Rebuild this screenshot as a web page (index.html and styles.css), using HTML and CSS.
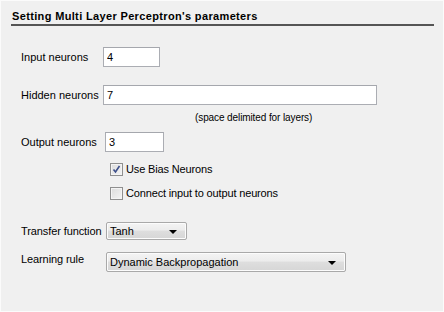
FILE: index.html
```html
<!DOCTYPE html>
<html lang="en">
  <head>
    <meta charset="UTF-8" />
    <title>Multi Layer Perceptron</title>
    <link rel="stylesheet" href="styles.css">
  </head>

  <body>
    <div class="panel">
      <div class="title">Setting Multi Layer Perceptron's parameters</div>

      <div class="form">
        <div class="row row-input">
          <label class="label">Input neurons</label>
          <input class="field field-small" type="text" value="4" />
        </div>

        <div class="row row-hidden">
          <label class="label">Hidden neurons</label>
          <input class="field field-wide" type="text" value="7" />
        </div>
        <div class="hint">(space delimited for layers)</div>

        <div class="row row-output">
          <label class="label label-out">Output neurons</label>
          <input class="field field-out" type="text" value="3" />
        </div>

        <div class="check check-first">
          <span class="box">
            <svg width="9" height="9" viewBox="0 0 9 9">
              <path d="M1.5 4.5 L3.5 7 L7.5 1" fill="none" stroke="#3d4f8a" stroke-width="1.6" />
            </svg>
          </span>
          <span>Use Bias Neurons</span>
        </div>

        <div class="check check-second">
          <span class="box"></span>
          <span>Connect input to output neurons</span>
        </div>

        <div class="row row-transfer">
          <label class="label label-sel">Transfer function</label>
          <div class="select select-small">
            <span>Tanh</span>
            <span class="arrow"></span>
          </div>
        </div>

        <div class="row row-rule">
          <label class="label label-sel label-top">Learning rule</label>
          <div class="select select-wide">
            <span>Dynamic Backpropagation</span>
            <span class="arrow"></span>
          </div>
        </div>
      </div>
    </div>
  </body>
</html>
```

FILE: styles.css
```css
body {
  margin: 0;
  padding: 0;
  font-family: "Liberation Sans", Arial, sans-serif;
  font-size: 11px;
  color: #000;
  background-color: #f0f0f0;
}

.panel {
  width: 444px;
  height: 312px;
  box-sizing: border-box;
  padding: 9px 9px 0 10px;
  background-color: #f0f0f0;
  border: 1px solid #fbfbfb;
}

.title {
  font-weight: bold;
  line-height: 13px;
  letter-spacing: 0.35px;
  padding-left: 1px;
  padding-bottom: 1px;
  border-bottom: 2px solid #555;
}

.form {
  padding-left: 10px;
}

.row {
  display: flex;
  align-items: center;
}

.label {
  width: 82px;
  flex-shrink: 0;
}

.label-out {
  width: 84px;
}

.label-sel {
  width: 85px;
  letter-spacing: -0.1px;
}

.label-top {
  align-self: flex-start;
  padding-top: 1px;
}

.field {
  box-sizing: border-box;
  height: 20px;
  margin: 0;
  padding: 0 3px;
  border: 1px solid #abadb3;
  border-top-color: #a5a7ad;
  background: #fff;
  font-family: inherit;
  font-size: 11px;
  color: #000;
  outline: none;
}

.field-small {
  width: 57px;
}

.field-wide {
  width: 274px;
}

.field-out {
  width: 59px;
}

.row-input {
  margin-top: 21px;
}

.row-hidden {
  margin-top: 18px;
}

.hint {
  padding-left: 174px;
  margin-top: 6px;
  line-height: 13px;
  font-size: 10px;
  letter-spacing: -0.1px;
}

.row-output {
  margin-top: 8px;
}

.check {
  display: flex;
  align-items: center;
  gap: 3px;
  padding-left: 89px;
  line-height: 13px;
  letter-spacing: -0.15px;
}

.check-first {
  margin-top: 11px;
}

.check-second {
  margin-top: 11px;
}

.box {
  width: 13px;
  height: 13px;
  box-sizing: border-box;
  border: 1px solid #8f8f8f;
  background: linear-gradient(135deg, #dcdcdc 0%, #f4f4f4 100%);
  box-shadow: inset 0 0 0 1px #f4f4f4;
  display: flex;
  align-items: center;
  justify-content: center;
}

.row-transfer {
  margin-top: 22px;
  height: 18px;
}

.row-rule {
  margin-top: 12px;
}

.select {
  box-sizing: border-box;
  display: flex;
  align-items: center;
  justify-content: space-between;
  padding: 0 9px 0 3px;
  border: 1px solid #a9a9a9;
  border-radius: 2px;
  background: linear-gradient(#f4f4f4 0%, #ececec 45%, #dedede 50%, #d6d6d6 100%);
  box-shadow: inset 0 0 0 1px #fcfcfc;
}

.select-small {
  width: 81px;
  height: 18px;
}

.select-wide {
  width: 240px;
  height: 20px;
}

.arrow {
  width: 0;
  height: 0;
  border-left: 4px solid transparent;
  border-right: 4px solid transparent;
  border-top: 4px solid #000;
  margin-top: 1px;
}
```
